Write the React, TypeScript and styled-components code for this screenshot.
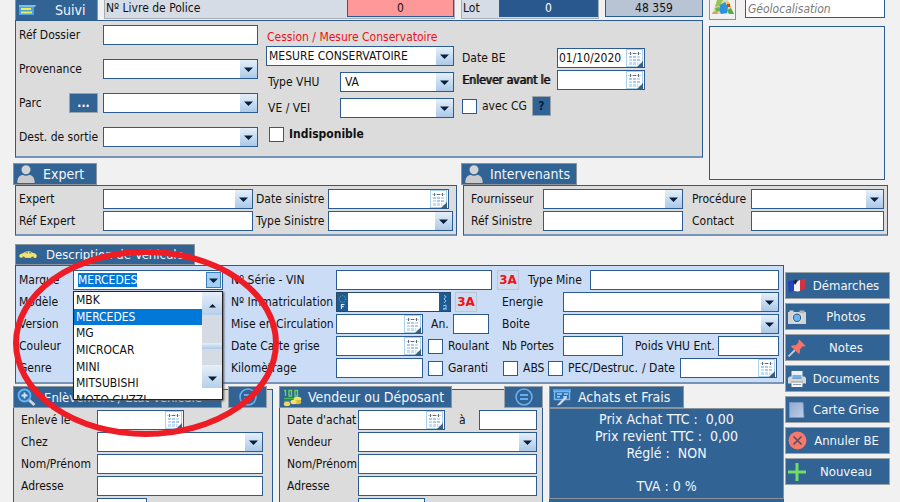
import React, { useEffect, useRef } from "react";
import styled, { createGlobalStyle, css } from "styled-components";

const BLUE = "#316395";
const LINE = "#2a5b92";
const GREY = "#dcdcdc";

const GlobalStyle = createGlobalStyle`
  *, *::before, *::after { box-sizing: border-box; }
  body { margin: 0; background: #f1f1f1; }
  body, input, select, button {
    font-family: "DejaVu Sans Condensed", "DejaVu Sans", sans-serif;
    font-size: 12px;
    color: #111;
  }
`;

/* ---------- page frame ---------- */

const Page = styled.main`
  height: 100vh;
  overflow: hidden;
  padding: 0 10px 0 13px;
`;

const TopGrid = styled.div`
  display: grid;
  grid-template-columns: 442fr 240fr 179fr;
  column-gap: 6px;
  padding: 0 2px;
`;

const HeaderBar = styled.div`
  grid-column: 1 / 3;
  display: flex;
  gap: 6px;
  height: 20px;
`;

const Geo = styled.div`
  grid-column: 3;
  grid-row: 1 / 4;
  display: flex;
  flex-direction: column;
  gap: 6px;
  padding: 0 3px 5px 0;
`;

const GeoRow = styled.div`
  display: flex;
  gap: 9px;
  height: 20px;
`;

const MapArea = styled.div`
  flex: 1;
  border: 1px solid ${LINE};
`;

const Lower = styled.div`
  display: flex;
  gap: 1px;
  margin-top: 8px;
`;

const LowerMain = styled.div`
  flex: 1;
  min-width: 0;
`;

const Side = styled.nav`
  width: 105px;
  display: flex;
  flex-direction: column;
  gap: 4px;
  padding-top: 28px;
`;

const BottomGrid = styled.div`
  display: grid;
  grid-template-columns: minmax(0, 260fr) minmax(0, 264fr) minmax(0, 235fr);
  column-gap: 6px;
  align-items: start;
  margin-top: 2px;
`;

/* ---------- panels ---------- */

const Panel = styled.section<{ $span?: string; $tone?: string }>`
  grid-column: ${(p) => p.$span ?? "auto"};
  background: ${(p) => p.$tone ?? GREY};
  border: 1px solid ${LINE};
  border-bottom: 2px solid #7594b8;
`;

const SuiviPanel = styled(Panel)`
  display: grid;
  grid-template-columns: minmax(239px, 1fr) 188px 240px;
  column-gap: 8px;
  height: 138px;
  padding: 4px 2px 0 3px;
`;

const PairPanel = styled(Panel)<{ $indent: number }>`
  display: flex;
  flex-direction: column;
  gap: 2px;
  padding: 3px 3px 3px ${(p) => p.$indent}px;
`;

const VehiclePanel = styled(Panel)`
  display: flex;
  flex-direction: column;
  gap: 2px;
  margin-left: 2px;
  padding: 4px 4px 4px 3px;
`;

const SheetPanel = styled(Panel)`
  min-height: 140px;
  margin-top: 3px;
`;

const SheetHead = styled.header`
  display: flex;
  justify-content: space-between;
  margin: -4px -1px 0 -1px;
`;

const SheetBody = styled.div<{ $end: number }>`
  display: flex;
  flex-direction: column;
  gap: 2px;
  padding: 2px ${(p) => p.$end}px 0 7px;
`;

const Stack = styled.div<{ $gap: number; $top?: number }>`
  display: flex;
  flex-direction: column;
  gap: ${(p) => p.$gap}px;
  padding-top: ${(p) => p.$top ?? 0}px;
`;

const Row = styled.div<{ $gap?: number }>`
  display: flex;
  align-items: center;
  gap: ${(p) => p.$gap ?? 0}px;
  height: 20px;
  white-space: nowrap;
`;

const TabRow = styled.div`
  display: flex;
  align-items: flex-end;
  height: 27px;
  margin-left: -2px;
`;

const VehicleTabRow = styled.div`
  display: flex;
  margin-left: 2px;
`;

const Tab = styled.h2<{ $width: number; $pad?: number; $small?: boolean }>`
  flex: none;
  display: flex;
  align-items: center;
  width: ${(p) => p.$width}px;
  height: 22px;
  margin: 0;
  padding-left: 3px;
  gap: ${(p) => p.$pad ?? 8}px;
  background: ${BLUE};
  border: 1px solid #8b939b;
  color: #f4f7fb;
  font-size: ${(p) => (p.$small ? 13 : 14)}px;
  font-weight: 400;
  white-space: nowrap;
`;

const HeaderTab = styled(Tab)`
  height: 20px;
  border-top: 0;
  border-bottom: 0;
`;

const VehicleTab = styled(Tab)`
  height: 21px;
`;

/* ---------- controls ---------- */

const sized = css<{ $w?: number }>`
  ${(p) => (p.$w ? `flex: none; width: ${p.$w}px;` : "flex: 1 1 0; min-width: 0;")}
`;

const Text = styled.span<{ $w?: number }>`
  ${(p) => p.$w && `width: ${p.$w}px;`}
  flex: none;
`;

const Caption = styled.label<{ $w?: number; $bold?: boolean }>`
  ${(p) => p.$w && `width: ${p.$w}px;`}
  flex: none;
  font-weight: ${(p) => (p.$bold ? 700 : 400)};
`;

const HeavyCaption = styled(Caption)`
  text-shadow: 1px 0 currentColor;
`;

const Alert = styled.p`
  margin: 0;
  padding: 1px;
  line-height: 16px;
  color: #f01018;
`;

const Field = styled.input<{ $w?: number }>`
  ${sized}
  height: 20px;
  padding: 0 2px;
  background: #fff;
  border: 1px solid ${LINE};
  border-radius: 0;
  outline: none;
`;

const GeoField = styled(Field)`
  height: 18px;
  border-top: 0;
  font-style: italic;
  &::placeholder { color: #7a7a7a; }
`;

const Counter = styled(Field)<{ $fill: string; $ink?: string }>`
  height: 17px;
  border-top: 0;
  background: ${(p) => p.$fill};
  color: ${(p) => p.$ink ?? "#111"};
  text-align: center;
`;

const CounterBox = styled.div<{ $w?: number }>`
  ${sized}
  display: flex;
  justify-content: space-between;
  height: 19px;
  padding-left: 1px;
  background: #d6dce6;
  border: 1px solid #a9aeb6;
  border-top: 0;
  line-height: 16px;
`;

const ComboShell = styled.span<{ $w?: number }>`
  ${sized}
  display: grid;
  height: 20px;
  background: #fff;
  border: 1px solid ${LINE};
`;

const ComboSelect = styled.select<{ $inset?: number }>`
  grid-area: 1 / 1;
  width: 100%;
  min-width: 0;
  padding: 0 18px 0 ${(p) => p.$inset ?? 2}px;
  appearance: none;
  background: transparent;
  border: 0;
  outline: none;
`;

const Arrow = styled.span`
  grid-area: 1 / 1;
  justify-self: end;
  display: flex;
  align-items: center;
  justify-content: center;
  width: 17px;
  background: linear-gradient(#e6eff9, #abc9e8);
  pointer-events: none;
`;

const DateShell = styled.span<{ $w?: number }>`
  ${sized}
  display: flex;
  height: 20px;
  background: #fff;
  border: 1px solid ${LINE};
`;

const DateInput = styled.input`
  flex: 1;
  min-width: 0;
  padding: 0 1px;
  border: 0;
  background: transparent;
  outline: none;
`;

const DateButton = styled.button`
  flex: none;
  display: flex;
  width: 18px;
  padding: 0;
  border: 0;
  background: none;
`;

const Check = styled.input.attrs({ type: "checkbox" })`
  flex: none;
  width: 15px;
  height: 15px;
  margin: 0;
  appearance: none;
  background: #fff;
  border: 1px solid ${LINE};
  &:checked { background: ${LINE}; }
`;

const BlueButton = styled.button<{ $w: number; $ink?: string }>`
  flex: none;
  width: ${(p) => p.$w}px;
  height: 20px;
  padding: 0;
  display: flex;
  align-items: center;
  justify-content: center;
  background: ${BLUE};
  border: 1px solid #9aa2aa;
  color: ${(p) => p.$ink ?? "#fff"};
  font-weight: 700;
`;

const RoundTab = styled(BlueButton)`
  height: 22px;
`;

const AaaButton = styled.button`
  flex: none;
  width: 22px;
  height: 20px;
  padding: 0;
  background: #d0dcee;
  border: 1px solid #b9c6da;
  color: #f01018;
  font-family: "DejaVu Sans", sans-serif;
  font-weight: 700;
`;

const MapButton = styled.button`
  flex: none;
  width: 27px;
  height: 20px;
  padding: 0;
  background: #f1f1f1;
  border: 1px solid #7d92ab;
  border-top: 0;
`;

const SideButton = styled.button`
  display: flex;
  align-items: center;
  height: 27px;
  padding: 0 3px 0 2px;
  background: ${BLUE};
  border: 1px solid #9aa2aa;
  color: #f4f7fb;
  font-size: 13px;
  white-space: nowrap;
`;

const SideLabel = styled.span`
  flex: 1;
  text-align: center;
`;

/* ---------- brand drop-down ---------- */

const BrandBox = styled.div`
  position: relative;
  flex: none;
  display: flex;
  width: 150px;
  height: 20px;
  padding: 1px;
  background: #fff;
  border: 1px solid ${LINE};
`;

const BrandInput = styled.input`
  flex: 1;
  min-width: 0;
  padding: 0 3px;
  border: 0;
  outline: none;
  &::selection { background: #0078d7; color: #fff; }
`;

const BrandToggle = styled.button`
  flex: none;
  display: flex;
  align-items: center;
  justify-content: center;
  width: 15px;
  padding: 0;
  background: #a5d0f5;
  border: 1px solid #3c7fb8;
`;

const Popup = styled.div`
  position: absolute;
  z-index: 2;
  top: 20px;
  left: -1px;
  right: -1px;
  height: 109px;
  display: flex;
  overflow: hidden;
  background: #fff;
  border: 1px solid #222;
  box-shadow: 1px 1px 2px #555;
`;

const Options = styled.ul`
  flex: 1;
  display: grid;
  grid-auto-rows: 1fr;
  height: 116px;
  margin: 0;
  padding: 0;
  list-style: none;
`;

const Option = styled.li<{ $on: boolean }>`
  display: flex;
  align-items: center;
  padding-left: 2px;
  background: ${(p) => (p.$on ? "#0078d7" : "#fff")};
  color: ${(p) => (p.$on ? "#fff" : "#111")};
`;

const Scroll = styled.div`
  width: 20px;
  height: 96px;
  display: flex;
  flex-direction: column;
  background: #d5dae3;
`;

const ScrollButton = styled.button`
  height: 23px;
  padding: 0;
  border: 0;
  background: linear-gradient(#e6eff9, #b5cfea);
`;

const Thumb = styled.div`
  height: 6px;
  margin: 28px 0 16px;
  background: linear-gradient(#e6eff9, #abc9e8);
`;

const Ring = styled.svg`
  position: absolute;
  z-index: 3;
  top: -25px;
  left: -62px;
  pointer-events: none;
`;

/* ---------- plate and totals ---------- */

const Plate = styled.span`
  flex: none;
  display: flex;
  width: 115px;
  height: 20px;
  background: #fff;
  border: 1px solid #27476b;
`;

const Totals = styled.section`
  background: ${BLUE};
  border: 1px solid #8b939b;
  height: 91px;
  padding-top: 2px;
  color: #f4f7fb;
  font-size: 14px;
  line-height: 17px;
  text-align: center;
  white-space: pre;
`;

const TotalsFoot = styled.div`
  height: 40px;
  background: ${BLUE};
`;

const TotalsLine = styled.div`
  min-height: 16px;
`;

/* ---------- drawings ---------- */

const Triangle = ({ up }: { up?: boolean }) => (
  <svg width="9" height="5" viewBox="0 0 9 5" aria-hidden="true">
    <path d={up ? "M1 4.5h7L4.5 1z" : "M0 .5h9L4.5 5z"} fill="#06203f" />
  </svg>
);

const CalendarIcon = () => (
  <svg width="18" height="18" viewBox="0 0 18 18" aria-hidden="true">
    <path d="M0 0h17v18H0z" fill="#a9d2ea" />
    <path d="M1 1h15v16H1z" fill="#fff" />
    <path d="M2 4h13v1H2z" fill="#c9cfd6" />
    <path d="M4 3h1v3H4zM12 3h1v3h-1zM7 4h3v1H7z" fill="#5f6b78" />
    <path d="M3 7h11v9H3z" fill="#c5dcf6" />
    <path d="M6 7h1v9H6zM10 7h1v9h-1zM3 9h11v1H3zM3 12h11v1H3z" fill="#fff" />
    <path d="M7 7h3v2H7zM7 10h3v2H7z" fill="#a3ccfa" />
    <path d="M3 7h3v2H3zM11 10h3v2h-3z" fill="#b9c7d8" />
    <path d="M17 12v6h-6z" fill="#38607f" />
    <path d="M12 16v-3h4z" fill="#eef5fb" />
  </svg>
);

const FormIcon = () => (
  <svg width="18" height="14" viewBox="0 0 18 14" aria-hidden="true">
    <path d="M0 2h17l-2 3v7H0z" fill="#4f9fe2" />
    <path d="M0 2h17l-1 2H0z" fill="#79bdf2" />
    <path d="M2 6h10M2 9.500h11" stroke="#e8f04c" strokeWidth="2" />
  </svg>
);

const PersonIcon = () => (
  <svg width="18" height="18" viewBox="0 0 18 18" aria-hidden="true">
    <circle cx="9" cy="4.800" r="4.500" fill="#d2d3d6" />
    <path d="M.3 18c0-5 1.700-7.500 5.200-8.300 2 1.500 5 1.500 7 0 3.500.8 5.200 3.300 5.200 8.300z" fill="#c9cacd" />
  </svg>
);

const CarIcon = () => (
  <svg width="18" height="12" viewBox="0 0 18 12" aria-hidden="true">
    <path d="M.3 6.500C1 5 2.500 4.600 4 4.200c2-2.300 7.500-3 10-.2 2 .3 3.600 1 3.800 3-.1 1.500-1 2-2 2L2 8.800C.8 8.600.1 8 .3 6.500z" fill="#eee673" />
    <path d="M5.500 4.300C6.500 3.300 8 2.900 9 2.800V4.500zM10 2.800c1.500 0 2.300.5 3 1.400l-3 .3z" fill="#8d9a7c" />
    <circle cx="4.500" cy="8.800" r="1.300" fill="#5b6a60" />
    <circle cx="13.500" cy="8.800" r="1.300" fill="#5b6a60" />
  </svg>
);

const ZoomIcon = () => (
  <svg width="19" height="19" viewBox="0 0 19 19" aria-hidden="true">
    <path d="M12 12l5.500 5" stroke="#d2d5dc" strokeWidth="3" />
    <circle cx="7.500" cy="7.500" r="6" fill="#2e6fae" stroke="#6bb2f0" strokeWidth="1.800" />
    <path d="M4.500 7.500h6M7.500 4.500v6" stroke="#cfe8ff" strokeWidth="1.800" />
  </svg>
);

const MoneyIcon = () => (
  <svg width="20" height="19" viewBox="0 0 20 19" aria-hidden="true">
    <path d="M1 2.500h1.500V8M6 2.500h2.500V8H6zM12 2.500h2.500V8H12z" fill="none" stroke="#64d45e" strokeWidth="1.400" />
    <path d="M1 10.500h10M1 13.500h6" stroke="#4db84d" strokeWidth="1.500" />
    <ellipse cx="14.500" cy="11" rx="3.800" ry="2.200" fill="#f3e36a" />
    <ellipse cx="14.500" cy="14" rx="3.800" ry="2.200" fill="#d9bf3d" />
    <ellipse cx="10.500" cy="14" rx="3" ry="2.200" fill="#f3e36a" />
    <ellipse cx="4" cy="16" rx="3.200" ry="2.200" fill="#efdc5c" />
  </svg>
);

const EqualIcon = () => (
  <svg width="18" height="18" viewBox="0 0 18 18" aria-hidden="true">
    <circle cx="9" cy="9" r="8" fill="none" stroke="#69aeea" strokeWidth="1.600" />
    <path d="M5 7h8M5 11h8" stroke="#69aeea" strokeWidth="2" />
  </svg>
);

const BoardIcon = () => (
  <svg width="19" height="18" viewBox="0 0 19 18" aria-hidden="true">
    <path d="M0 1h18v3H0z" fill="#4f9cdb" />
    <path d="M1.500 3.500h15v8h-15z" fill="#2d6fb0" stroke="#73b9f2" strokeWidth="1.500" />
    <path d="M4 6h5M11 6h4M4 8.800h3M10 8.800h4" stroke="#9bd2fb" strokeWidth="1.400" />
    <path d="M12.500 8L5 16l-1 1.500L7 17l7-7z" fill="#d6d8da" />
  </svg>
);

const FlagIcon = () => (
  <svg width="18" height="16" viewBox="0 0 18 16" aria-hidden="true">
    <path d="M0 4c2-1 4-2 6-1.500V13c-2-.3-4 1-5 2z" fill="#2342bd" />
    <path d="M6 2.500c2 0 3.500 1 6-.5v11c-2 1-4 0-6 0z" fill="#f3f3f7" />
    <path d="M12 2c2-.5 4-1.500 6-.5l-1 10c-2-.5-3 .5-5 1.500z" fill="#cf3342" />
    <path d="M5 3.500c2-2 3-2 5-1L7 7z" fill="#1a2446" />
  </svg>
);

const CameraIcon = () => (
  <svg width="18" height="16" viewBox="0 0 18 16" aria-hidden="true">
    <path d="M0 3h1.500V1.500h4V3H18v12H0z" fill="#d3d3d5" />
    <path d="M11.500 1.500h5V4h-5z" fill="#aeb4bb" />
    <circle cx="9" cy="8.800" r="5" fill="#ededee" />
    <circle cx="9" cy="8.800" r="4.200" fill="#2b567f" />
    <circle cx="9" cy="8.800" r="3.200" fill="#68b5f5" />
  </svg>
);

const PinIcon = () => (
  <svg width="18" height="18" viewBox="0 0 18 18" aria-hidden="true">
    <path d="M7 11L.5 17.500" stroke="#c9ccd1" strokeWidth="1.800" />
    <path d="M11.200.5l6.300 6.300-1.500.9-1.200-.4-3 3.200c.5 1.800.2 3.300-.8 4.500L2.800 7.200c1.300-1.100 2.900-1.300 4.600-.7l3.200-3.200-.4-1.300z" fill="#fa7265" />
  </svg>
);

const PrinterIcon = () => (
  <svg width="18" height="18" viewBox="0 0 18 18" aria-hidden="true">
    <path d="M3.500 1h11v6h-11z" fill="#eef1f4" />
    <path d="M4.500 5h9v3h-9z" fill="#65b4f3" />
    <path d="M1.500 6.500h3v2h9v-2h3L18 8v5.500H0V8z" fill="#d5d6d8" />
    <path d="M3.500 12h11v5h-11z" fill="#f5f6f8" />
    <path d="M3 12h12M5 14.500h8" stroke="#8f9aa6" />
  </svg>
);

const CardIcon = () => (
  <svg width="18" height="18" viewBox="0 0 18 18" aria-hidden="true">
    <defs>
      <linearGradient id="card" x1="0" y1="0" x2="1" y2="1">
        <stop offset="0" stopColor="#8ea9d2" />
        <stop offset="1" stopColor="#c0cfe6" />
      </linearGradient>
    </defs>
    <path d="M1.500 1.500H15l1 15H1.500z" fill="url(#card)" stroke="#7b95bb" />
  </svg>
);

const CancelIcon = () => (
  <svg width="19" height="19" viewBox="0 0 19 19" aria-hidden="true">
    <circle cx="9.500" cy="9.500" r="9" fill="#fb7768" />
    <path d="M5.500 5.500l8 8M13.500 5.500l-8 8" stroke="#54506a" strokeWidth="1.700" />
  </svg>
);

const PlusIcon = () => (
  <svg width="18" height="18" viewBox="0 0 18 18" aria-hidden="true">
    <path d="M9 0v18M0 9h18" stroke="#72dd65" strokeWidth="3" />
  </svg>
);

const MapIcon = () => (
  <svg width="22" height="16" viewBox="0 0 22 16" aria-hidden="true">
    <path d="M3 5l4-5h9l3 6 3 8H0z" fill="#d9dfc4" />
    <path d="M5 0h6L8 6 3 7z" fill="#9cc44c" />
    <path d="M8 5l5-3 3 5-1 6-6 1-2-4z" fill="#2b93dc" />
    <path d="M14 1l4 2 1 5-4-2z" fill="#f5c42c" />
    <path d="M15 4h3v3h-3z" fill="#e33b2b" />
    <path d="M15 10l4-2 3 6h-5z" fill="#57ab49" />
    <path d="M3 8l4-1 1 4-4 1z" fill="#6fb64a" />
    <path d="M1 12l4-1 1 3H0z" fill="#e79a5d" />
  </svg>
);

const EuroBand = () => (
  <svg width="11" height="18" viewBox="0 0 11 18" aria-hidden="true">
    <path d="M0 0h11v18H0z" fill="#1b5c97" />
    <circle cx="5.500" cy="6" r="3.300" fill="none" stroke="#8fa978" strokeDasharray="1 1.070" />
    <path d="M4.500 16v-4.500h3M4.500 13.500h2.300" fill="none" stroke="#dbe8f5" strokeWidth="1.200" />
  </svg>
);

const RegionBand = () => (
  <svg width="11" height="18" viewBox="0 0 11 18" aria-hidden="true">
    <path d="M0 0h11v18H0z" fill="#1b5c97" />
    <path d="M5 2.500l2 1L5 6l2 2-2 2M4 13l3-1v3l-3 1h4" fill="none" stroke="#a3c2dd" />
  </svg>
);

/* ---------- composed controls ---------- */

type ComboProps = { id: string; w?: number; value?: string; inset?: number };

const Combo = ({ id, w, value, inset }: ComboProps) => (
  <ComboShell $w={w}>
    <ComboSelect id={id} $inset={inset} defaultValue={value ?? ""}>
      <option value={value ?? ""}>{value ?? ""}</option>
    </ComboSelect>
    <Arrow>
      <Triangle />
    </Arrow>
  </ComboShell>
);

const DateField = ({ id, w, value }: ComboProps) => (
  <DateShell $w={w}>
    <DateInput id={id} defaultValue={value ?? ""} />
    <DateButton type="button" aria-label="Calendrier">
      <CalendarIcon />
    </DateButton>
  </DateShell>
);

const brands = ["MBK", "MERCEDES", "MG", "MICROCAR", "MINI", "MITSUBISHI", "MOTO GUZZI"];

const BrandCombo = () => {
  const input = useRef<HTMLInputElement>(null);
  useEffect(() => {
    input.current?.focus();
    input.current?.select();
  }, []);
  return (
    <BrandBox>
      <BrandInput
        ref={input}
        id="marque"
        role="combobox"
        aria-expanded="true"
        aria-controls="marques"
        defaultValue="MERCEDES"
      />
      <BrandToggle type="button" aria-label="Ouvrir la liste">
        <Triangle />
      </BrandToggle>
      <Popup>
        <Options id="marques" role="listbox">
          {brands.map((name) => (
            <Option key={name} role="option" aria-selected={name === "MERCEDES"} $on={name === "MERCEDES"}>
              {name}
            </Option>
          ))}
        </Options>
        <Scroll>
          <ScrollButton type="button" aria-label="Monter">
            <Triangle up />
          </ScrollButton>
          <Thumb />
          <ScrollButton type="button" aria-label="Descendre">
            <Triangle />
          </ScrollButton>
        </Scroll>
      </Popup>
      <Ring width="270" height="194" viewBox="0 0 270 194" aria-hidden="true">
        <ellipse cx="134" cy="97" rx="130" ry="91" fill="none" stroke="#ee1c25" strokeWidth="6" />
      </Ring>
    </BrandBox>
  );
};

const actions: [string, React.ReactNode][] = [
  ["Démarches", <FlagIcon />],
  ["Photos", <CameraIcon />],
  ["Notes", <PinIcon />],
  ["Documents", <PrinterIcon />],
  ["Carte Grise", <CardIcon />],
  ["Annuler BE", <CancelIcon />],
  ["Nouveau", <PlusIcon />],
];

const totals = ["Prix Achat TTC :  0,00", "Prix revient TTC :  0,00", "Réglé :  NON", "", "TVA : 0 %"];

export default function App() {
  return (
    <Page>
      <GlobalStyle />
      <TopGrid>
        <HeaderBar>
          <HeaderTab $width={83} $pad={18}>
            <FormIcon />
            Suivi
          </HeaderTab>
          <CounterBox>
            <Caption htmlFor="livre">Nº Livre de Police</Caption>
            <Counter id="livre" $w={107} $fill="#ff9999" defaultValue="0" />
          </CounterBox>
          <CounterBox $w={138}>
            <Caption htmlFor="lot">Lot</Caption>
            <Counter id="lot" $w={99} $fill="#29588f" $ink="#fff" defaultValue="0" />
          </CounterBox>
          <Counter $w={98} $fill="#b8c3d4" aria-label="Numéro" defaultValue="48 359" />
        </HeaderBar>

        <Geo>
          <GeoRow>
            <MapButton type="button" aria-label="Carte">
              <MapIcon />
            </MapButton>
            <GeoField aria-label="Géolocalisation" placeholder="Géolocalisation" />
          </GeoRow>
          <MapArea />
        </Geo>

        <SuiviPanel $span="1 / 3">
          <Stack $gap={14}>
            <Row>
              <Caption htmlFor="dossier" $w={84}>Réf Dossier</Caption>
              <Field id="dossier" />
            </Row>
            <Row>
              <Caption htmlFor="provenance" $w={84}>Provenance</Caption>
              <Combo id="provenance" />
            </Row>
            <Row>
              <Caption htmlFor="parc" $w={50}>Parc</Caption>
              <BlueButton type="button" $w={29}>...</BlueButton>
              <Text $w={5} />
              <Combo id="parc" />
            </Row>
            <Row>
              <Caption htmlFor="sortie" $w={84}>Dest. de sortie</Caption>
              <Combo id="sortie" />
            </Row>
          </Stack>
          <Stack $gap={6} $top={3}>
            <div>
              <Alert>Cession / Mesure Conservatoire</Alert>
              <Row>
                <Combo id="cession" value="MESURE CONSERVATOIRE" />
              </Row>
            </div>
            <Row>
              <Text $w={2} />
              <Caption htmlFor="vhu" $w={72}>Type VHU</Caption>
              <Combo id="vhu" value="VA" inset={4} />
            </Row>
            <Row>
              <Text $w={2} />
              <Caption htmlFor="vei" $w={72}>VE / VEI</Caption>
              <Combo id="vei" />
            </Row>
            <Row>
              <Text $w={3} />
              <Check id="indispo" />
              <Text $w={5} />
              <Caption htmlFor="indispo" $bold>Indisponible</Caption>
            </Row>
          </Stack>
          <Stack $gap={6} $top={23}>
            <Stack $gap={2}>
              <Row>
                <Caption htmlFor="datebe" $w={95}>Date BE</Caption>
                <DateField id="datebe" w={88} value="01/10/2020" />
              </Row>
              <Row>
                <HeavyCaption htmlFor="avant" $w={95}>Enlever avant le</HeavyCaption>
                <DateField id="avant" w={88} />
              </Row>
            </Stack>
            <Row $gap={5}>
              <Check id="cg" />
              <Caption htmlFor="cg">avec CG</Caption>
              <BlueButton type="button" $w={19} $ink="#06203f">?</BlueButton>
            </Row>
          </Stack>
        </SuiviPanel>

        <TabRow>
          <Tab $width={84}>
            <PersonIcon />
            Expert
          </Tab>
        </TabRow>
        <TabRow>
          <Tab $width={116} $pad={7}>
            <PersonIcon />
            Intervenants
          </Tab>
        </TabRow>

        <PairPanel $indent={3}>
          <Row>
            <Caption htmlFor="expert" $w={84}>Expert</Caption>
            <Combo id="expert" />
            <Text $w={3} />
            <Caption htmlFor="dsin" $w={72}>Date sinistre</Caption>
            <DateField id="dsin" w={121} />
            <Text $w={4} />
          </Row>
          <Row>
            <Caption htmlFor="rexp" $w={84}>Réf Expert</Caption>
            <Field id="rexp" />
            <Text $w={3} />
            <Caption htmlFor="tsin" $w={72}>Type Sinistre</Caption>
            <Combo id="tsin" w={125} />
          </Row>
        </PairPanel>
        <PairPanel $span="2 / 4" $indent={7}>
          <Row>
            <Caption htmlFor="fourn" $w={72}>Fournisseur</Caption>
            <Combo id="fourn" />
            <Text $w={9} />
            <Caption htmlFor="proc" $w={59}>Procédure</Caption>
            <Combo id="proc" w={133} />
          </Row>
          <Row>
            <Caption htmlFor="rsin" $w={72}>Réf Sinistre</Caption>
            <Field id="rsin" />
            <Text $w={9} />
            <Caption htmlFor="contact" $w={59}>Contact</Caption>
            <Field id="contact" $w={133} />
          </Row>
        </PairPanel>
      </TopGrid>

      <Lower>
        <LowerMain>
          <VehicleTabRow>
            <VehicleTab $width={180} $pad={9} $small>
              <CarIcon />
              Description de Véhicule
            </VehicleTab>
          </VehicleTabRow>
          <VehiclePanel $tone="#cadcf6">
            <Row>
              <Caption htmlFor="marque" $w={54}>Marque</Caption>
              <BrandCombo />
              <Text $w={8} />
              <Caption htmlFor="vin" $w={105}>Nº Série - VIN</Caption>
              <Field id="vin" />
              <Text $w={5} />
              <AaaButton type="button">3A</AaaButton>
              <Text $w={9} />
              <Caption htmlFor="mine" $w={62}>Type Mine</Caption>
              <Field id="mine" $w={189} />
            </Row>
            <Row>
              <Text $w={212}>Modèle</Text>
              <Caption htmlFor="immat" $w={105}>Nº Immatriculation</Caption>
              <Plate>
                <EuroBand />
                <DateInput id="immat" />
                <RegionBand />
              </Plate>
              <Text $w={4} />
              <AaaButton type="button">3A</AaaButton>
              <Text $w={25} />
              <Caption htmlFor="energie" $w={61}>Energie</Caption>
              <Combo id="energie" />
            </Row>
            <Row>
              <Text $w={212}>Version</Text>
              <Caption htmlFor="mise" $w={105}>Mise en Circulation</Caption>
              <DateField id="mise" w={87} />
              <Text $w={8} />
              <Caption htmlFor="an" $w={22}>An.</Caption>
              <Field id="an" $w={36} />
              <Text $w={13} />
              <Caption htmlFor="boite" $w={61}>Boite</Caption>
              <Combo id="boite" />
            </Row>
            <Row>
              <Text $w={212}>Couleur</Text>
              <Caption htmlFor="dcg" $w={105}>Date Carte grise</Caption>
              <DateField id="dcg" w={87} />
              <Text $w={5} />
              <Check id="roulant" />
              <Text $w={5} />
              <Caption htmlFor="roulant" $w={54}>Roulant</Caption>
              <Caption htmlFor="portes" $w={61}>Nb Portes</Caption>
              <Field id="portes" />
              <Text $w={12} />
              <Caption htmlFor="poids" $w={83}>Poids VHU Ent.</Caption>
              <Field id="poids" $w={61} />
            </Row>
            <Row>
              <Text $w={212}>Genre</Text>
              <Caption htmlFor="km" $w={105}>Kilomètrage</Caption>
              <Field id="km" $w={87} />
              <Text $w={5} />
              <Check id="garanti" />
              <Text $w={5} />
              <Caption htmlFor="garanti" $w={55}>Garanti</Caption>
              <Check id="abs" />
              <Text $w={5} />
              <Caption htmlFor="abs" $w={25}>ABS</Caption>
              <Check id="pec" />
              <Text $w={5} />
              <Caption htmlFor="pec" $w={74}>PEC/Destruc.</Caption>
              <Caption htmlFor="pecdate" $w={38}>/ Date</Caption>
              <DateField id="pecdate" />
              <Text $w={2} />
            </Row>
          </VehiclePanel>

          <BottomGrid>
            <SheetPanel>
              <SheetHead>
                <Tab $width={209} $small>
                  <ZoomIcon />
                  Enlèvement / Etat Véhicule
                </Tab>
                <RoundTab type="button" $w={39} aria-label="Détails enlèvement">
                  <EqualIcon />
                </RoundTab>
                <Text />
              </SheetHead>
              <SheetBody $end={9}>
                <Row>
                  <Caption htmlFor="enleve" $w={76}>Enlevé le</Caption>
                  <DateField id="enleve" w={87} />
                </Row>
                <Row>
                  <Caption htmlFor="chez" $w={76}>Chez</Caption>
                  <Combo id="chez" />
                </Row>
                <Row>
                  <Caption htmlFor="nom1" $w={76}>Nom/Prénom</Caption>
                  <Field id="nom1" />
                </Row>
                <Row>
                  <Caption htmlFor="adr1" $w={76}>Adresse</Caption>
                  <Field id="adr1" />
                </Row>
                <Row>
                  <Text $w={76} />
                  <Field aria-label="Code postal" $w={50} />
                </Row>
              </SheetBody>
            </SheetPanel>

            <SheetPanel>
              <SheetHead>
                <Tab $width={173} $pad={5}>
                  <MoneyIcon />
                  Vendeur ou Déposant
                </Tab>
                <RoundTab type="button" $w={39} aria-label="Détails vendeur">
                  <EqualIcon />
                </RoundTab>
              </SheetHead>
              <SheetBody $end={5}>
                <Row>
                  <Caption htmlFor="achat" $w={71}>Date d'achat</Caption>
                  <DateField id="achat" w={87} />
                  <Text $w={14} />
                  <Caption htmlFor="heure" $w={20}>à</Caption>
                  <Field id="heure" />
                </Row>
                <Row>
                  <Caption htmlFor="vendeur" $w={71}>Vendeur</Caption>
                  <Combo id="vendeur" />
                </Row>
                <Row>
                  <Caption htmlFor="nom2" $w={71}>Nom/Prénom</Caption>
                  <Field id="nom2" />
                </Row>
                <Row>
                  <Caption htmlFor="adr2" $w={71}>Adresse</Caption>
                  <Field id="adr2" />
                </Row>
                <Row>
                  <Text $w={71} />
                  <Field aria-label="Code postal vendeur" $w={67} />
                </Row>
              </SheetBody>
            </SheetPanel>

            <div>
              <Tab $width={135} $pad={6}>
                <BoardIcon />
                Achats et Frais
              </Tab>
              <Totals>
                {totals.map((line, i) => (
                  <TotalsLine key={i}>{line}</TotalsLine>
                ))}
              </Totals>
              <TotalsFoot />
            </div>
          </BottomGrid>
        </LowerMain>

        <Side>
          {actions.map(([label, icon]) => (
            <SideButton key={label} type="button">
              {icon}
              <SideLabel>{label}</SideLabel>
            </SideButton>
          ))}
        </Side>
      </Lower>
    </Page>
  );
}
